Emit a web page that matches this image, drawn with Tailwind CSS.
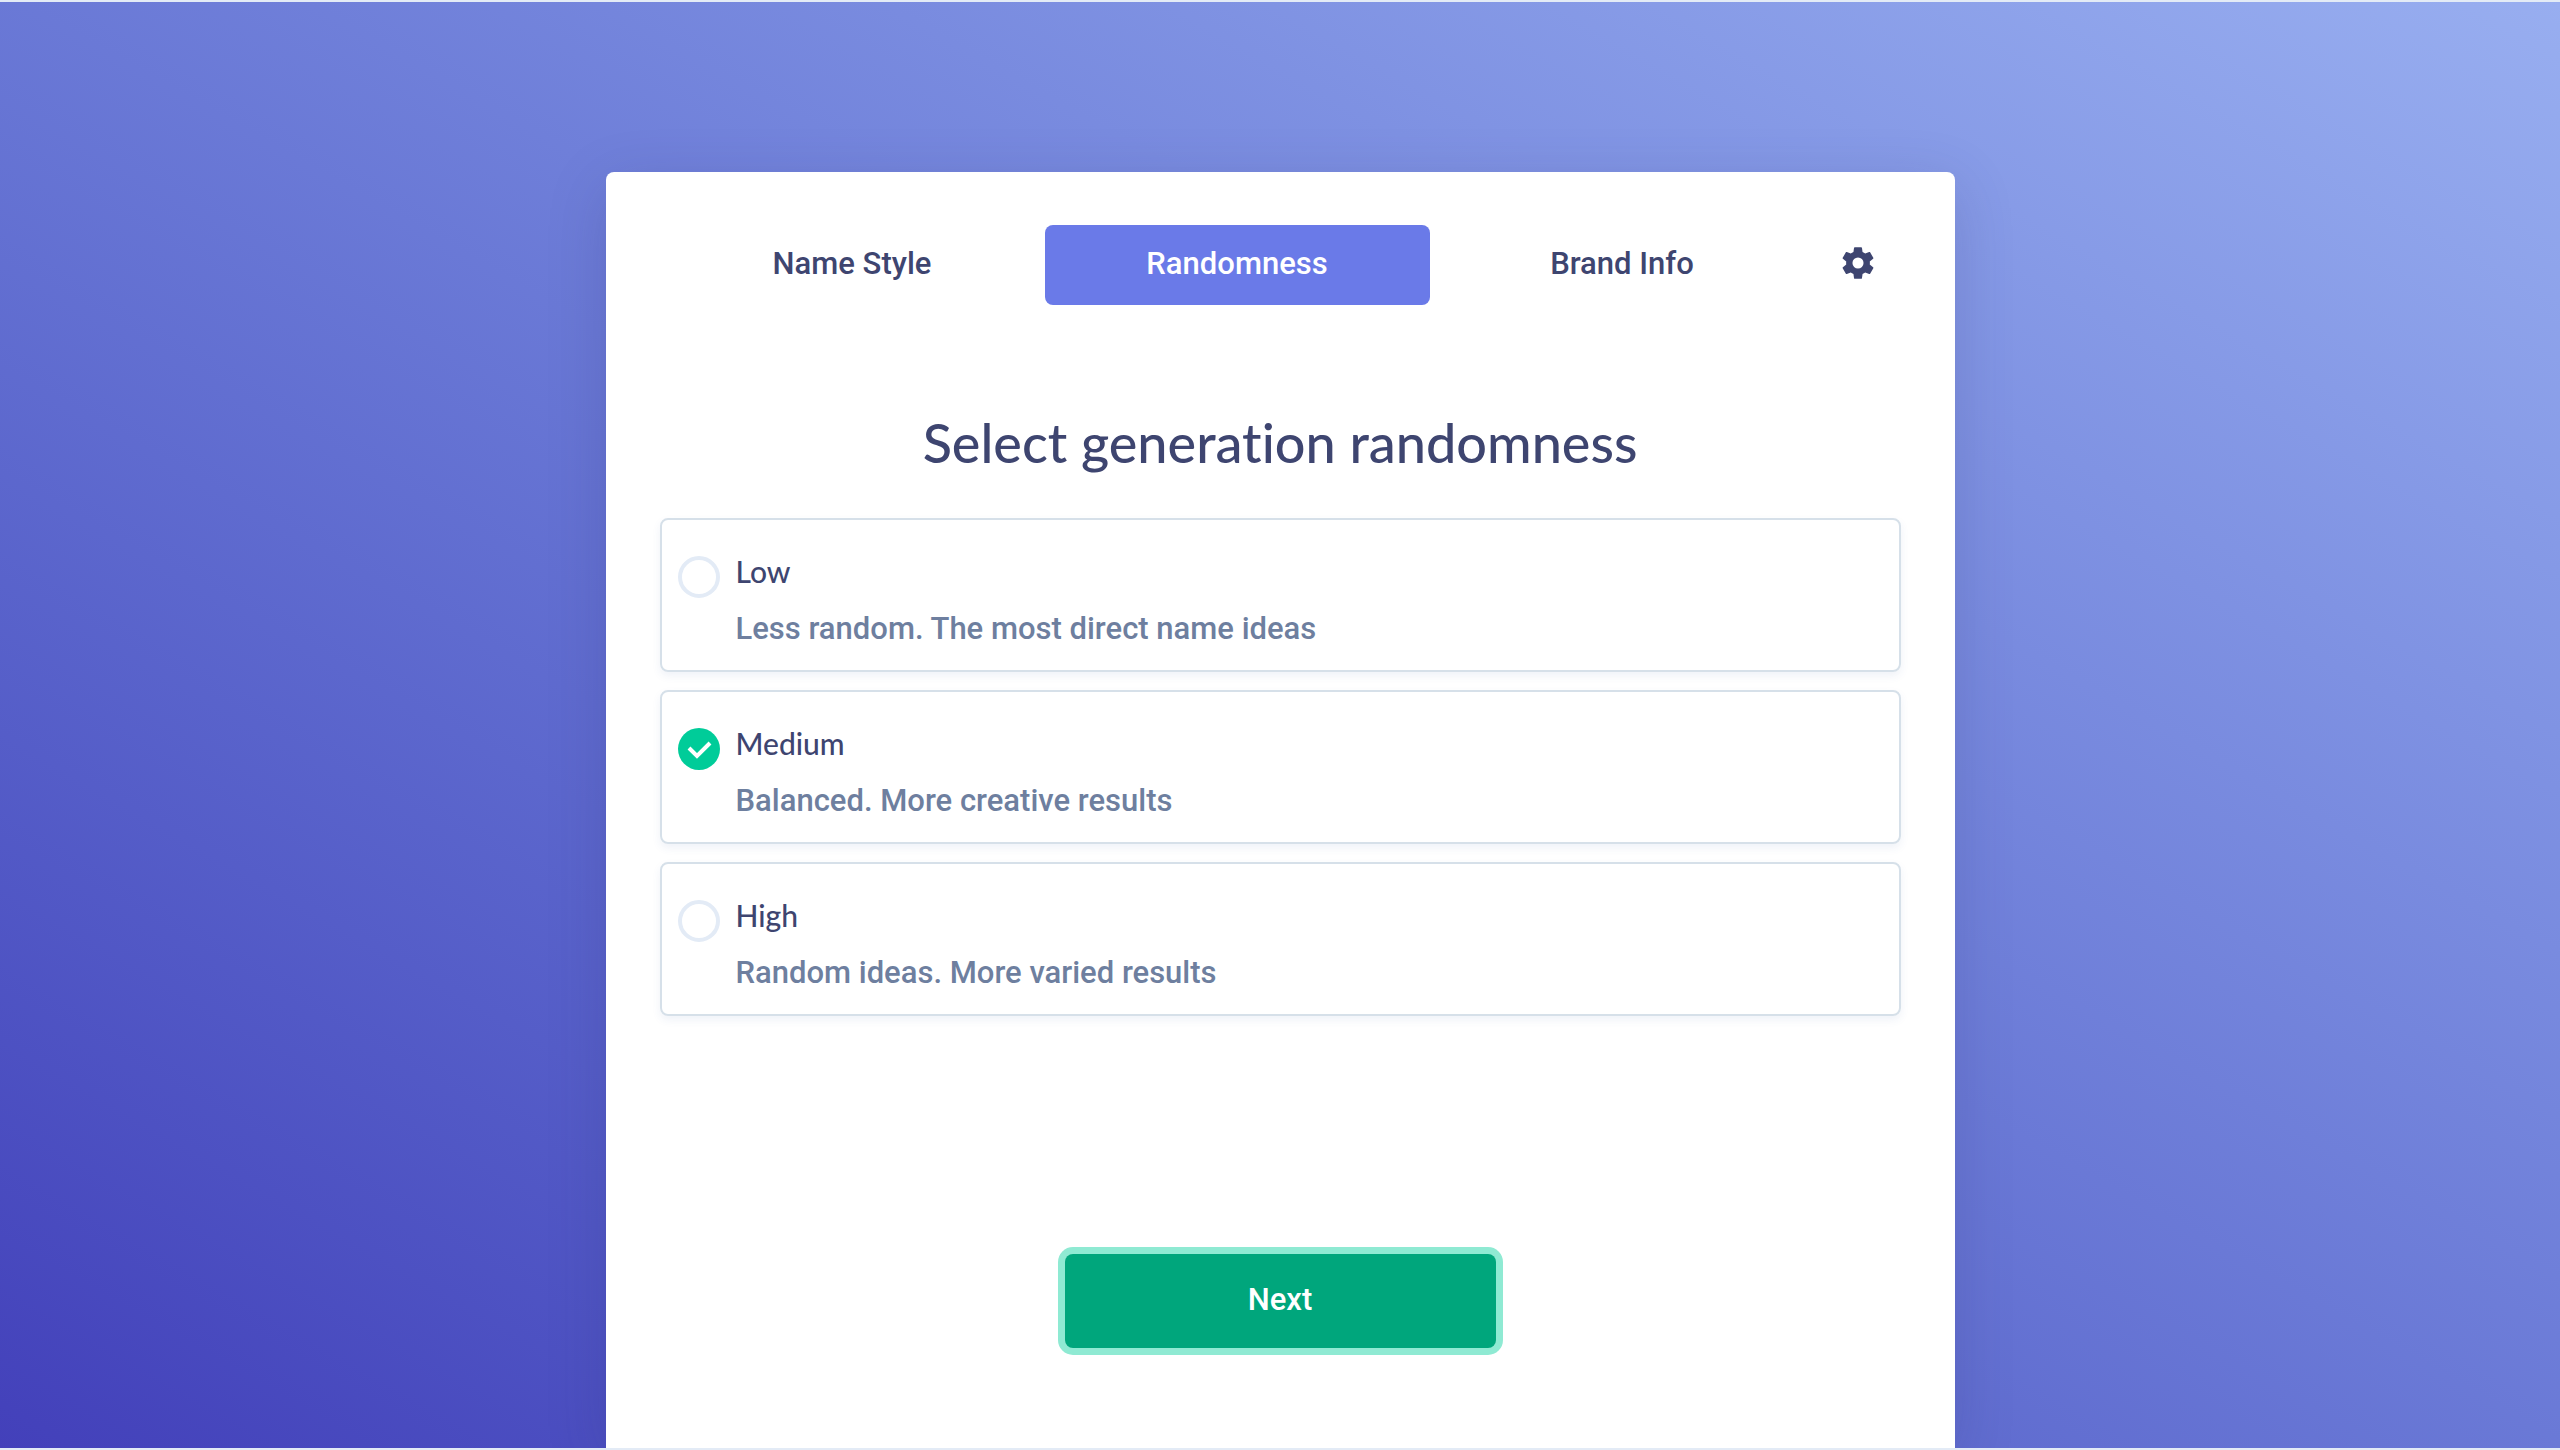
<!DOCTYPE html>
<html lang="en">
<head>
<meta charset="utf-8">
<meta name="viewport" content="width=device-width, initial-scale=1">
<title>Select generation randomness</title>
<script src="https://cdn.jsdelivr.net/npm/@tailwindcss/browser@4"></script>
</head>
<body class="flex h-screen flex-col overflow-hidden border-y-2 border-[#e3ebf6] bg-linear-to-tr from-[#4340ba] to-[#98aef0] font-['Roboto',sans-serif] text-[31px]/[46px] font-medium text-[#3e4570]">
<main class="mx-auto mt-[170px] flex w-full max-w-[1349px] grow flex-col items-center rounded-t-lg bg-white px-[54px] pt-[53px] shadow-[0_15px_60px_rgba(50,50,110,0.2)]">
  <nav class="flex h-20 w-full shrink-0 items-stretch" aria-label="Steps">
    <button type="button" class="flex-1 rounded-lg pb-0.5">Name Style</button>
    <button type="button" aria-current="step" class="flex-1 rounded-lg bg-[#6a7ae8] pb-0.5 text-white">Randomness</button>
    <button type="button" class="flex-1 rounded-lg pb-0.5">Brand Info</button>
    <button type="button" aria-label="Settings" class="flex w-[86px] items-center justify-center pb-1">
      <svg class="size-[38px]" viewBox="0 0 24 24" fill="currentColor"><path d="M12,15.5A3.5,3.5 0 0,1 8.5,12A3.5,3.5 0 0,1 12,8.5A3.5,3.5 0 0,1 15.5,12A3.5,3.5 0 0,1 12,15.5M19.43,12.97C19.47,12.65 19.5,12.33 19.5,12C19.5,11.67 19.47,11.34 19.43,11L21.54,9.37C21.73,9.22 21.78,8.95 21.66,8.73L19.66,5.27C19.54,5.05 19.27,4.96 19.05,5.05L16.56,6.05C16.04,5.66 15.5,5.32 14.87,5.07L14.5,2.42C14.46,2.18 14.25,2 14,2H10C9.75,2 9.54,2.18 9.5,2.42L9.13,5.07C8.5,5.32 7.96,5.66 7.44,6.05L4.95,5.05C4.73,4.96 4.46,5.05 4.34,5.27L2.34,8.73C2.21,8.95 2.27,9.22 2.46,9.37L4.57,11C4.53,11.34 4.5,11.67 4.5,12C4.5,12.33 4.53,12.65 4.57,12.97L2.46,14.63C2.27,14.78 2.21,15.05 2.34,15.27L4.34,18.73C4.46,18.95 4.73,19.03 4.95,18.95L7.44,17.94C7.96,18.34 8.5,18.68 9.13,18.93L9.5,21.58C9.54,21.82 9.75,22 10,22H14C14.25,22 14.46,21.82 14.5,21.58L14.87,18.93C15.5,18.67 16.04,18.34 16.56,17.94L19.05,18.95C19.27,19.03 19.54,18.95 19.66,18.73L21.66,15.27C21.78,15.05 21.73,14.78 21.54,14.63L19.43,12.97Z"/></svg>
    </button>
  </nav>
  <h1 class="mt-[103px] font-['Lato',sans-serif] text-[54px]/[70px] font-medium [font-variant-ligatures:none]">Select generation randomness</h1>
  <div role="radiogroup" aria-label="Randomness" class="mt-10 flex w-full flex-col gap-[18px]">
    <label class="grid h-[154px] grid-cols-[42px_1fr] gap-x-4 rounded-lg border-2 border-[#d6e0e9] px-4 pt-7 shadow-[0_4px_8px_rgba(50,90,160,0.08)]">
      <input type="radio" name="level" class="mt-2 size-[42px] appearance-none rounded-full border-4 border-[#e3ebf6]">
      <span><span class="block h-[58px] font-['Lato',sans-serif] text-[30px]/[46px]">Low</span><span class="block text-[#6e7f9f]">Less random. The most direct name ideas</span></span>
    </label>
    <label class="grid h-[154px] grid-cols-[42px_1fr] gap-x-4 rounded-lg border-2 border-[#d6e0e9] px-4 pt-7 shadow-[0_4px_8px_rgba(50,90,160,0.08)]">
      <span class="relative mt-2 size-[42px]">
        <input type="radio" name="level" checked class="block size-[42px] appearance-none rounded-full bg-[#00cc99]">
        <svg class="pointer-events-none absolute inset-0 size-[42px]" viewBox="0 0 42 42" fill="none" stroke="white" stroke-width="4"><path d="M11 20l8 8L32 15"/></svg>
      </span>
      <span><span class="block h-[58px] font-['Lato',sans-serif] text-[30px]/[46px]">Medium</span><span class="block text-[#6e7f9f]">Balanced. More creative results</span></span>
    </label>
    <label class="grid h-[154px] grid-cols-[42px_1fr] gap-x-4 rounded-lg border-2 border-[#d6e0e9] px-4 pt-7 shadow-[0_4px_8px_rgba(50,90,160,0.08)]">
      <input type="radio" name="level" class="mt-2 size-[42px] appearance-none rounded-full border-4 border-[#e3ebf6]">
      <span><span class="block h-[58px] font-['Lato',sans-serif] text-[30px]/[46px]">High</span><span class="block text-[#6e7f9f]">Random ideas. More varied results</span></span>
    </label>
  </div>
  <button type="button" class="mt-[238px] h-[94px] w-[431px] shrink-0 rounded-lg bg-[#00a67c] pb-0.5 text-white ring-7 ring-[#8fead3]">Next</button>
</main>
</body>
</html>
